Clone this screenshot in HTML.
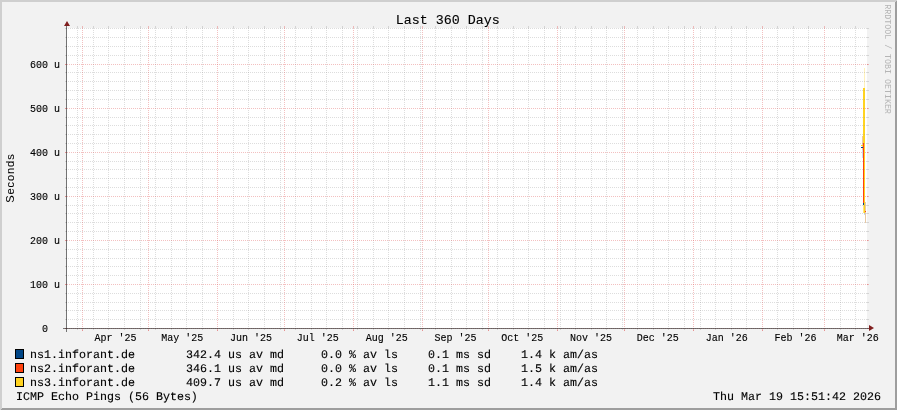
<!DOCTYPE html><html><head><meta charset="utf-8"><style>html,body{margin:0;padding:0;background:#f2f2f2;overflow:hidden}svg{display:block}text{font-family:"Liberation Mono",monospace}svg{will-change:transform}</style></head><body>
<svg width="897" height="410" viewBox="0 0 897 410">
<rect x="0" y="0" width="897" height="410" fill="#f2f2f2"/>
<g shape-rendering="crispEdges">
<rect x="0" y="0" width="897" height="1" fill="#cfcfcf"/>
<rect x="0" y="1" width="896" height="1" fill="#cfcfcf"/>
<rect x="0" y="0" width="1" height="410" fill="#cfcfcf"/>
<rect x="1" y="0" width="1" height="409" fill="#cfcfcf"/>
<rect x="896" y="1" width="1" height="409" fill="#9e9e9e"/>
<rect x="895" y="2" width="1" height="408" fill="#9e9e9e"/>
<rect x="1" y="409" width="896" height="1" fill="#9e9e9e"/>
<rect x="2" y="408" width="895" height="1" fill="#9e9e9e"/>
<rect x="67" y="28" width="800" height="300" fill="#ffffff"/>
</g>
<g shape-rendering="crispEdges">
<rect x="864" y="68" width="1" height="20" fill="#ffd320" opacity="0.3"/>
<rect x="863" y="88" width="2" height="55" fill="#ffd320"/>
<rect x="864" y="143" width="1" height="70" fill="#ffd320"/>
<rect x="863" y="143" width="1" height="60" fill="#ff420e"/>
<rect x="862" y="136" width="1" height="14" fill="#e6c9a6"/>
<rect x="862" y="150" width="1" height="8" fill="#c8dcf0"/>
<rect x="861" y="145" width="2" height="1" fill="#ffd320"/>
<rect x="861" y="147" width="2" height="1" fill="#004586"/>
<rect x="863" y="203" width="1" height="2" fill="#004586"/>
<rect x="863" y="205" width="1" height="8" fill="#ffd320" opacity="0.6"/>
<rect x="865" y="202" width="1" height="21" fill="#e6c9a6"/>
<rect x="865" y="211" width="1" height="1" fill="#ff420e"/>
<rect x="864" y="213" width="1" height="2" fill="#c8dcf0"/>
</g>
<g shape-rendering="crispEdges" fill="none" stroke-width="1">
<path d="M66 319.5H868M66 310.5H868M66 302.5H868M66 293.5H868M66 275.5H868M66 266.5H868M66 258.5H868M66 249.5H868M66 231.5H868M66 222.5H868M66 213.5H868M66 205.5H868M66 187.5H868M66 178.5H868M66 169.5H868M66 161.5H868M66 143.5H868M66 134.5H868M66 125.5H868M66 117.5H868M66 99.5H868M66 90.5H868M66 81.5H868M66 72.5H868M66 55.5H868M66 46.5H868M66 37.5H868M66 28.5H868" stroke="rgba(143,143,143,0.3)" stroke-dasharray="1 1"/>
<path d="M65 319.5H67M867 319.5H869M65 310.5H67M867 310.5H869M65 302.5H67M867 302.5H869M65 293.5H67M867 293.5H869M65 275.5H67M867 275.5H869M65 266.5H67M867 266.5H869M65 258.5H67M867 258.5H869M65 249.5H67M867 249.5H869M65 231.5H67M867 231.5H869M65 222.5H67M867 222.5H869M65 213.5H67M867 213.5H869M65 205.5H67M867 205.5H869M65 187.5H67M867 187.5H869M65 178.5H67M867 178.5H869M65 169.5H67M867 169.5H869M65 161.5H67M867 161.5H869M65 143.5H67M867 143.5H869M65 134.5H67M867 134.5H869M65 125.5H67M867 125.5H869M65 117.5H67M867 117.5H869M65 99.5H67M867 99.5H869M65 90.5H67M867 90.5H869M65 81.5H67M867 81.5H869M65 72.5H67M867 72.5H869M65 55.5H67M867 55.5H869M65 46.5H67M867 46.5H869M65 37.5H67M867 37.5H869M65 28.5H67M867 28.5H869" stroke="rgba(143,143,143,0.3)"/>
<path d="M77.5 28V328M93.5 28V328M108.5 28V328M124.5 28V328M140.5 28V328M155.5 28V328M171.5 28V328M186.5 28V328M202.5 28V328M233.5 28V328M248.5 28V328M264.5 28V328M280.5 28V328M295.5 28V328M311.5 28V328M326.5 28V328M342.5 28V328M357.5 28V328M373.5 28V328M388.5 28V328M404.5 28V328M420.5 28V328M435.5 28V328M451.5 28V328M466.5 28V328M482.5 28V328M497.5 28V328M513.5 28V328M528.5 28V328M544.5 28V328M560.5 28V328M575.5 28V328M591.5 28V328M606.5 28V328M622.5 28V328M637.5 28V328M653.5 28V328M668.5 28V328M684.5 28V328M700.5 28V328M715.5 28V328M731.5 28V328M746.5 28V328M777.5 28V328M793.5 28V328M808.5 28V328M840.5 28V328M855.5 28V328" stroke="rgba(143,143,143,0.3)" stroke-dasharray="1 1"/>
<path d="M77.5 26V28M77.5 328V330M93.5 26V28M93.5 328V330M108.5 26V28M108.5 328V330M124.5 26V28M124.5 328V330M140.5 26V28M140.5 328V330M155.5 26V28M155.5 328V330M171.5 26V28M171.5 328V330M186.5 26V28M186.5 328V330M202.5 26V28M202.5 328V330M233.5 26V28M233.5 328V330M248.5 26V28M248.5 328V330M264.5 26V28M264.5 328V330M280.5 26V28M280.5 328V330M295.5 26V28M295.5 328V330M311.5 26V28M311.5 328V330M326.5 26V28M326.5 328V330M342.5 26V28M342.5 328V330M357.5 26V28M357.5 328V330M373.5 26V28M373.5 328V330M388.5 26V28M388.5 328V330M404.5 26V28M404.5 328V330M420.5 26V28M420.5 328V330M435.5 26V28M435.5 328V330M451.5 26V28M451.5 328V330M466.5 26V28M466.5 328V330M482.5 26V28M482.5 328V330M497.5 26V28M497.5 328V330M513.5 26V28M513.5 328V330M528.5 26V28M528.5 328V330M544.5 26V28M544.5 328V330M560.5 26V28M560.5 328V330M575.5 26V28M575.5 328V330M591.5 26V28M591.5 328V330M606.5 26V28M606.5 328V330M622.5 26V28M622.5 328V330M637.5 26V28M637.5 328V330M653.5 26V28M653.5 328V330M668.5 26V28M668.5 328V330M684.5 26V28M684.5 328V330M700.5 26V28M700.5 328V330M715.5 26V28M715.5 328V330M731.5 26V28M731.5 328V330M746.5 26V28M746.5 328V330M777.5 26V28M777.5 328V330M793.5 26V28M793.5 328V330M808.5 26V28M808.5 328V330M840.5 26V28M840.5 328V330M855.5 26V28M855.5 328V330" stroke="rgba(143,143,143,0.3)"/>
<path d="M65 328.5H869M65 284.5H869M65 240.5H869M65 196.5H869M65 152.5H869M65 108.5H869M65 64.5H869" stroke="rgba(222,79,79,0.36)" stroke-dasharray="1 1"/>
<path d="M65 328.5H67M867 328.5H869M65 284.5H67M867 284.5H869M65 240.5H67M867 240.5H869M65 196.5H67M867 196.5H869M65 152.5H67M867 152.5H869M65 108.5H67M867 108.5H869M65 64.5H67M867 64.5H869" stroke="rgba(222,79,79,0.36)"/>
<path d="M82.5 28V328M148.5 28V328M217.5 28V328M284.5 28V328M353.5 28V328M422.5 28V328M488.5 28V328M557.5 28V328M624.5 28V328M693.5 28V328M762.5 28V328M824.5 28V328" stroke="rgba(222,79,79,0.36)" stroke-dasharray="1 1"/>
<path d="M82.5 26V28M82.5 328V331M148.5 26V28M148.5 328V331M217.5 26V28M217.5 328V331M284.5 26V28M284.5 328V331M353.5 26V28M353.5 328V331M422.5 26V28M422.5 328V331M488.5 26V28M488.5 328V331M557.5 26V28M557.5 328V331M624.5 26V28M624.5 328V331M693.5 26V28M693.5 328V331M762.5 26V28M762.5 328V331M824.5 26V28M824.5 328V331" stroke="rgba(222,79,79,0.36)"/>
<path d="M82.5 330V331M148.5 330V331M217.5 330V331M284.5 330V331M353.5 330V331M422.5 330V331M488.5 330V331M557.5 330V331M624.5 330V331M693.5 330V331M762.5 330V331M824.5 330V331" stroke="rgba(222,79,79,0.36)"/>
</g>
<g shape-rendering="crispEdges">
<rect x="63" y="328" width="806" height="1" fill="rgba(31,31,31,0.6)"/>
<rect x="66" y="26" width="1" height="306" fill="rgba(31,31,31,0.6)"/>
</g>
<path d="M64 26L67 21L70 26Z" fill="#801f1f"/>
<path d="M869 325L874 328L869 331Z" fill="#801f1f"/>
<g fill="#000" stroke="#000" stroke-width="0.12">
<text x="447.8" y="23.6" font-size="13.33" text-anchor="middle">Last 360 Days</text>
<text x="60" y="288" font-size="10" text-anchor="end">100 u</text>
<text x="60" y="244" font-size="10" text-anchor="end">200 u</text>
<text x="60" y="200" font-size="10" text-anchor="end">300 u</text>
<text x="60" y="156" font-size="10" text-anchor="end">400 u</text>
<text x="60" y="112" font-size="10" text-anchor="end">500 u</text>
<text x="60" y="68" font-size="10" text-anchor="end">600 u</text>
<text x="48" y="332" font-size="10" text-anchor="end">0</text>
<text x="115.56" y="341" font-size="10" text-anchor="middle">Apr '25</text>
<text x="182.23" y="341" font-size="10" text-anchor="middle">May '25</text>
<text x="251.12" y="341" font-size="10" text-anchor="middle">Jun '25</text>
<text x="317.79" y="341" font-size="10" text-anchor="middle">Jul '25</text>
<text x="386.68" y="341" font-size="10" text-anchor="middle">Aug '25</text>
<text x="455.56" y="341" font-size="10" text-anchor="middle">Sep '25</text>
<text x="522.23" y="341" font-size="10" text-anchor="middle">Oct '25</text>
<text x="591.12" y="341" font-size="10" text-anchor="middle">Nov '25</text>
<text x="657.79" y="341" font-size="10" text-anchor="middle">Dec '25</text>
<text x="726.68" y="341" font-size="10" text-anchor="middle">Jan '26</text>
<text x="795.56" y="341" font-size="10" text-anchor="middle">Feb '26</text>
<text x="857.79" y="341" font-size="10" text-anchor="middle">Mar '26</text>
<text transform="translate(14,178.1) rotate(-90)" font-size="11.1" letter-spacing="0.9" text-anchor="middle" style="font-family:Liberation Sans,sans-serif" stroke-width="0.05">Seconds</text>
<rect x="15.5" y="349.5" width="8" height="9" fill="#004586" stroke="#000" stroke-width="1"/>
<g transform="translate(0,358)" style="text-rendering:geometricPrecision"><text x="30" y="0" font-size="11.67">ns1.inforant.de</text><text x="186" y="0" font-size="11.67">342.4 us av md</text><text x="321" y="0" font-size="11.67">0.0 % av ls</text><text x="428" y="0" font-size="11.67">0.1 ms sd</text><text x="521" y="0" font-size="11.67">1.4 k am/as</text></g>
<rect x="15.5" y="363.5" width="8" height="9" fill="#ff420e" stroke="#000" stroke-width="1"/>
<g transform="translate(0,372)" style="text-rendering:geometricPrecision"><text x="30" y="0" font-size="11.67">ns2.inforant.de</text><text x="186" y="0" font-size="11.67">346.1 us av md</text><text x="321" y="0" font-size="11.67">0.0 % av ls</text><text x="428" y="0" font-size="11.67">0.1 ms sd</text><text x="521" y="0" font-size="11.67">1.5 k am/as</text></g>
<rect x="15.5" y="377.5" width="8" height="9" fill="#ffd320" stroke="#000" stroke-width="1"/>
<g transform="translate(0,386)" style="text-rendering:geometricPrecision"><text x="30" y="0" font-size="11.67">ns3.inforant.de</text><text x="186" y="0" font-size="11.67">409.7 us av md</text><text x="321" y="0" font-size="11.67">0.2 % av ls</text><text x="428" y="0" font-size="11.67">1.1 ms sd</text><text x="521" y="0" font-size="11.67">1.4 k am/as</text></g>
<g transform="translate(0,400)" style="text-rendering:geometricPrecision"><text x="16" y="0" font-size="11.67">ICMP Echo Pings (56 Bytes)</text><text x="713" y="0" font-size="11.67">Thu Mar 19 15:51:42 2026</text></g>
</g>
<text transform="translate(885,4.3) rotate(90)" font-size="8.3" fill="#b5b5b5">RRDTOOL / TOBI OETIKER</text>
</svg></body></html>
